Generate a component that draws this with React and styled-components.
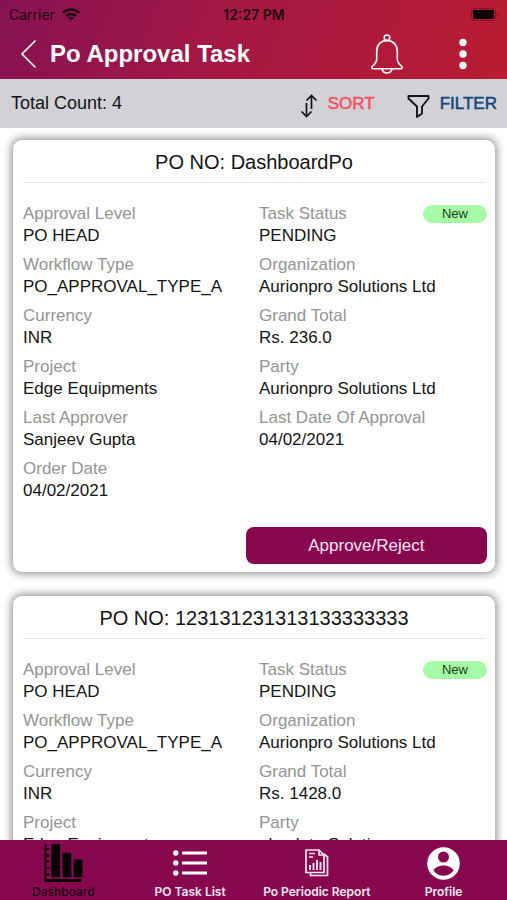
import React from 'react'
import styled, { createGlobalStyle } from 'styled-components'

const GlobalStyle = createGlobalStyle`
    * {
        box-sizing: border-box;
    }
    body {
        margin: 0;
        background: #ffffff;
        font-family: "Liberation Sans", Arial, sans-serif;
        color: #141414;
    }
`;

const Screen = styled.div`
    height: 100vh;
    display: flex;
    flex-direction: column;
`;

const Header = styled.header`
    background: linear-gradient(110deg, #861253 0%, #a51844 45%, #b91c31 100%);
`;

const StatusBar = styled.div`
    display: grid;
    grid-template-columns: 1fr auto 1fr;
    align-items: center;
    height: 28px;
    padding: 0 8px 0 9px;
    font-family: Inter, sans-serif;
    font-size: 14px;
    color: #22060f;
`;

const Carrier = styled.span`
    display: flex;
    align-items: center;
    gap: 7px;
`;

const Clock = styled.span`
    font-weight: 600;
`;

const Battery = styled.svg`
    justify-self: end;
`;

const TitleBar = styled.div`
    display: flex;
    align-items: center;
    height: 51px;
    padding: 0 40px 0 20px;
`;

const IconButton = styled.button`
    display: flex;
    padding: 0;
    border: none;
    background: none;
    color: white;
    cursor: pointer;
`;

const Title = styled.h1`
    flex: 1;
    margin: 0 0 0 13px;
    font-size: 24px;
    line-height: 32px;
    color: white;
`;

const HeaderActions = styled.div`
    display: flex;
    align-items: center;
    gap: 55px;
`;

const Toolbar = styled.div`
    display: flex;
    align-items: center;
    height: 49px;
    padding: 0 10px 0 11px;
    background: #d1d1d6;
`;

const Count = styled.span`
    flex: 1;
    font-size: 18px;
`;

const ToolButton = styled.button`
    display: flex;
    align-items: center;
    gap: 10px;
    margin-left: 32px;
    padding: 0;
    border: none;
    background: none;
    font: inherit;
    font-size: 17px;
    -webkit-text-stroke: 0.5px currentColor;
    color: ${props => props.$color};
    cursor: pointer;

    svg {
        margin-top: 4px;
        color: #141414;
    }
`;

const TaskList = styled.main`
    flex: 1;
    min-height: 0;
    overflow: auto;
    scrollbar-width: none;
    display: flex;
    flex-direction: column;
    gap: 24px;
    padding: 12px 12px 24px 13px;
`;

const Card = styled.article`
    flex-shrink: 0;
    padding: 0 8px 8px 10px;
    border-radius: 9px;
    background: white;
    box-shadow: 0 0 9px 2px rgba(0, 0, 0, 0.42);
`;

const CardTitle = styled.h2`
    margin: 0 2px 0 0;
    padding: 9px 0 7px;
    border-bottom: 1px solid #e2e2e2;
    font-size: 20px;
    font-weight: normal;
    line-height: 26px;
    text-align: center;
`;

const Fields = styled.dl`
    display: grid;
    grid-template-columns: 236px 1fr;
    row-gap: 7px;
    margin: 0;
    padding: 20px 0 25px;
`;

const Field = styled.div`
    font-size: 17px;
    line-height: 22px;
`;

const Label = styled.dt`
    display: flex;
    justify-content: space-between;
    align-items: center;
    color: #949494;
`;

const Value = styled.dd`
    margin: 0;
`;

const Badge = styled.span`
    width: 64px;
    border-radius: 9px;
    background: #a6fca6;
    color: #1c3a1c;
    font-size: 13px;
    line-height: 18px;
    text-align: center;
`;

const ApproveButton = styled.button`
    display: block;
    width: 52%;
    height: 37px;
    margin-left: auto;
    border: none;
    border-radius: 8px;
    background: #880850;
    color: #fbe6f2;
    font: inherit;
    font-size: 17px;
    cursor: pointer;
`;

const TabBar = styled.nav`
    display: grid;
    grid-template-columns: repeat(4, 1fr);
    height: 60px;
    background: #880850;
`;

const Tab = styled.a`
    display: flex;
    flex-direction: column;
    align-items: center;
    font-family: Inter, sans-serif;
    font-size: 12px;
    font-weight: ${props => props.$active ? 500 : 600};
    line-height: 16px;
    white-space: nowrap;
    text-decoration: none;
    color: ${props => props.$active ? '#1a0410' : '#f9e8f1'};
`;

const TabIcon = styled.span`
    display: flex;
    flex: 1;
    align-items: center;
    padding-top: 2px;
`;

const WifiIcon = () => (
    <svg width="18" height="13" viewBox="0 0 18 13" fill="none" stroke="currentColor" strokeWidth="2.4">
        <path d="M1 4.8a11.5 11.5 0 0 1 16 0" />
        <path d="M4 8a7.2 7.2 0 0 1 10 0" />
        <path d="M9 12.8 6.2 10a4 4 0 0 1 5.6 0z" fill="currentColor" stroke="none" />
    </svg>
)

const BatteryIcon = () => (
    <Battery width="28" height="13" viewBox="0 0 28 13">
        <rect x="0.5" y="0.5" width="24" height="12" rx="3.5" fill="none" stroke="#7d1226" />
        <rect x="2" y="2" width="21" height="9" rx="2" fill="#050103" />
        <path d="M26 4.5v4c1.4-.6 1.4-3.4 0-4z" fill="#7d1226" />
    </Battery>
)

const BackIcon = () => (
    <svg width="17" height="30" viewBox="0 0 17 30" fill="none" stroke="currentColor" strokeWidth="1.6">
        <path d="M15.5 1.5 2 15l13.500 13.500" />
    </svg>
)

const BellIcon = () => (
    <svg width="34" height="40" viewBox="0 0 34 40" fill="none" stroke="currentColor" strokeWidth="1.6">
        <circle cx="17" cy="3.8" r="2.8" />
        <path d="M17 6.500c-6.500 0-10.300 4.800-10.300 10.500v8c0 3.500-1.500 5-4 7-1.500 1.200-1.300 2.800.8 2.800h27c2.100 0 2.300-1.600.8-2.800-2.500-2-4-3.500-4-7v-8c0-5.700-3.800-10.500-10.300-10.500z" />
        <path d="M12 35c.6 2.500 2.600 4 5 4s4.400-1.500 5-4" />
    </svg>
)

const MoreIcon = () => (
    <svg width="8" height="32" viewBox="0 0 8 32" fill="currentColor">
        <circle cx="4" cy="4.5" r="3.7" />
        <circle cx="4" cy="16" r="3.7" />
        <circle cx="4" cy="27.5" r="3.7" />
    </svg>
)

const SortIcon = () => (
    <svg width="18" height="24" viewBox="0 0 18 24" fill="none" stroke="currentColor" strokeWidth="1.7">
        <path d="M6.5 9v13M1.500 17.500l5 5 5-5" />
        <path d="M11.500 15V2M6.500 6.500l5-5 5 5" />
    </svg>
)

const FilterIcon = () => (
    <svg width="23" height="24" viewBox="0 0 23 24" fill="none" stroke="currentColor" strokeWidth="1.9" strokeLinejoin="round">
        <path d="M1.500 2h20v2.500l-6.500 8v7l-5 3.500v-10.500l-8.500-8z" />
    </svg>
)

const DashboardIcon = () => (
    <svg width="40" height="38" viewBox="0 0 40 39" fill="#050103">
        <path d="M1 0h2v36h36v3h-38z" />
        <path d="M3 4h3v2h-3zM3 11h3v2h-3zM3 17h3v2h-3zM3 24h3v2h-3zM3 30h3v2h-3z" />
        <path d="M8 0h9v34h-9zM19.500 9h9v25h-9zM31 16h9v18h-9z" />
    </svg>
)

const ListIcon = () => (
    <svg width="34" height="26" viewBox="0 0 34 26" fill="white">
        <circle cx="2.800" cy="3" r="2.700" />
        <circle cx="2.800" cy="13" r="2.700" />
        <circle cx="2.800" cy="23" r="2.700" />
        <path d="M9 1.400h25v3.200h-25zM9 11.400h25v3.200h-25zM9 21.400h25v3.200h-25z" />
    </svg>
)

const ReportIcon = () => (
    <svg width="24" height="28" viewBox="0 0 24 28" fill="none" stroke="#f9e8f1" strokeWidth="1.7">
        <path d="M1 1h13l5 5v17.500h-18z" />
        <path d="M14 1v5h5" />
        <path d="M19 5l3.500 3v18.500h-17v-3" />
        <path d="M4 4.500h6M4 8h4" />
        <path d="M5 21v-5M8.500 21v-7M12 21v-10M15.500 21v-8" strokeWidth="1.900" />
    </svg>
)

const ProfileIcon = () => (
    <svg width="33" height="33" viewBox="0 0 33 33">
        <circle cx="16.500" cy="16.500" r="16.300" fill="white" />
        <circle cx="16.500" cy="10" r="5.500" fill="#880850" />
        <path d="M6.500 23.500c1.500-3.500 6-5 10-5s8.500 1.500 10 5c-2.300 3.500-6 5.300-10 5.300s-7.700-1.800-10-5.300z" fill="#880850" />
    </svg>
)

const tasks = [
    {
        poNo: 'DashboardPo',
        status: 'New',
        fields: [
            ['Approval Level', 'PO HEAD'],
            ['Task Status', 'PENDING'],
            ['Workflow Type', 'PO_APPROVAL_TYPE_A'],
            ['Organization', 'Aurionpro Solutions Ltd'],
            ['Currency', 'INR'],
            ['Grand Total', 'Rs. 236.0'],
            ['Project', 'Edge Equipments'],
            ['Party', 'Aurionpro Solutions Ltd'],
            ['Last Approver', 'Sanjeev Gupta'],
            ['Last Date Of Approval', '04/02/2021'],
            ['Order Date', '04/02/2021']
        ]
    },
    {
        poNo: '123131231313133333333',
        status: 'New',
        fields: [
            ['Approval Level', 'PO HEAD'],
            ['Task Status', 'PENDING'],
            ['Workflow Type', 'PO_APPROVAL_TYPE_A'],
            ['Organization', 'Aurionpro Solutions Ltd'],
            ['Currency', 'INR'],
            ['Grand Total', 'Rs. 1428.0'],
            ['Project', 'Edge Equipments'],
            ['Party', 'absolute Solutions']
        ]
    }
]

const tabs = [
    { name: 'Dashboard', icon: <DashboardIcon />, active: true },
    { name: 'PO Task List', icon: <ListIcon /> },
    { name: 'Po Periodic Report', icon: <ReportIcon /> },
    { name: 'Profile', icon: <ProfileIcon /> }
]

function TaskCard({ task }) {
    return (
        <Card>
            <CardTitle>PO NO: {task.poNo}</CardTitle>
            <Fields>
                {task.fields.map(([label, value]) => (
                    <Field key={label}>
                        <Label>
                            {label}
                            {label === 'Task Status' && <Badge>{task.status}</Badge>}
                        </Label>
                        <Value>{value}</Value>
                    </Field>
                ))}
            </Fields>
            <ApproveButton type="button">Approve/Reject</ApproveButton>
        </Card>
    )
}

export default function App() {
    return (
        <Screen>
            <GlobalStyle />

            <Header>
                <StatusBar>
                    <Carrier>Carrier <WifiIcon /></Carrier>
                    <Clock>12:27 PM</Clock>
                    <BatteryIcon />
                </StatusBar>
                <TitleBar>
                    <IconButton type="button" aria-label="Back"><BackIcon /></IconButton>
                    <Title>Po Approval Task</Title>
                    <HeaderActions>
                        <IconButton type="button" aria-label="Notifications"><BellIcon /></IconButton>
                        <IconButton type="button" aria-label="More"><MoreIcon /></IconButton>
                    </HeaderActions>
                </TitleBar>
            </Header>

            <Toolbar>
                <Count>Total Count: 4</Count>
                <ToolButton type="button" $color="#f8505c"><SortIcon />SORT</ToolButton>
                <ToolButton type="button" $color="#14457c"><FilterIcon />FILTER</ToolButton>
            </Toolbar>

            <TaskList>
                {tasks.map(task => <TaskCard key={task.poNo} task={task} />)}
            </TaskList>

            {/* bottom navigation */}
            <TabBar>
                {tabs.map(tab => (
                    <Tab key={tab.name} href="#" $active={tab.active}>
                        <TabIcon>{tab.icon}</TabIcon>
                        {tab.name}
                    </Tab>
                ))}
            </TabBar>
        </Screen>
    )
}
